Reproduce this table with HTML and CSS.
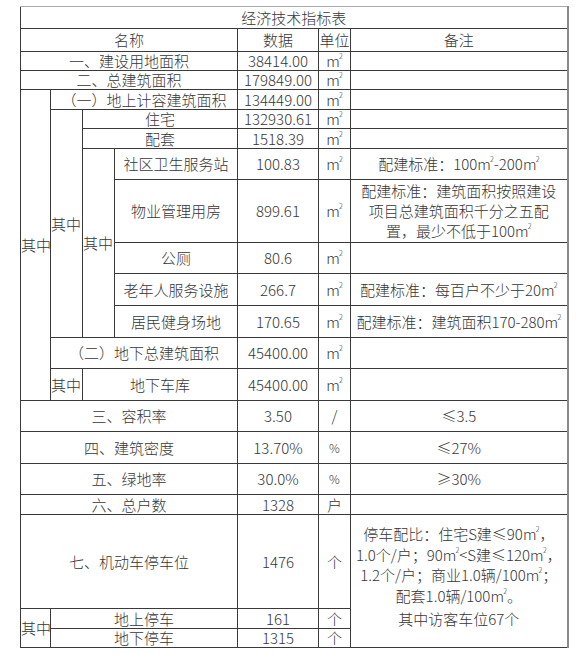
FILE: index.html
```html
<!DOCTYPE html>
<html lang="zh-CN">
<head>
<meta charset="utf-8">
<title>经济技术指标表</title>
<link rel="stylesheet" href="styles.css">
</head>
<body>
<div class="page">
<table class="sheet">
<colgroup>
<col class="c1"><col class="c2"><col class="c3"><col class="c4"><col class="c5"><col class="c6"><col class="c7">
</colgroup>
<tbody>
<tr class="h22"><td colspan="7" class="title">经济技术指标表</td></tr>
<tr class="h23"><td colspan="4" class="head">名称</td><td class="head">数据</td><td class="head">单位</td><td class="head">备注</td></tr>
<tr class="h19"><td colspan="4">一、建设用地面积</td><td>38414.00</td><td><span class="sq">m<sup>2</sup></span></td><td></td></tr>
<tr class="h19"><td colspan="4">二、总建筑面积</td><td>179849.00</td><td><span class="sq">m<sup>2</sup></span></td><td></td></tr>
<tr class="h20"><td rowspan="10" class="qz">其中</td><td colspan="3">（一）地上计容建筑面积</td><td>134449.00</td><td><span class="sq">m<sup>2</sup></span></td><td></td></tr>
<tr class="h19"><td rowspan="7" class="qz">其中</td><td colspan="2">住宅</td><td>132930.61</td><td><span class="sq">m<sup>2</sup></span></td><td></td></tr>
<tr class="h20"><td colspan="2">配套</td><td>1518.39</td><td><span class="sq">m<sup>2</sup></span></td><td></td></tr>
<tr class="h31"><td rowspan="5" class="qz">其中</td><td>社区卫生服务站</td><td>100.83</td><td><span class="sq">m<sup>2</sup></span></td><td>配建标准：100<span class="sq">m<sup>2</sup></span>-200<span class="sq">m<sup>2</sup></span></td></tr>
<tr class="h63"><td>物业管理用房</td><td>899.61</td><td><span class="sq">m<sup>2</sup></span></td><td class="multi">配建标准：建筑面积按照建设<br>项目总建筑面积千分之五配<br>置，最少不低于100<span class="sq">m<sup>2</sup></span></td></tr>
<tr class="h31"><td>公厕</td><td>80.6</td><td><span class="sq">m<sup>2</sup></span></td><td></td></tr>
<tr class="h32"><td>老年人服务设施</td><td>266.7</td><td><span class="sq">m<sup>2</sup></span></td><td>配建标准：每百户不少于20<span class="sq">m<sup>2</sup></span></td></tr>
<tr class="h32"><td>居民健身场地</td><td>170.65</td><td><span class="sq">m<sup>2</sup></span></td><td>配建标准：建筑面积170-280<span class="sq">m<sup>2</sup></span></td></tr>
<tr class="h31"><td colspan="3">（二）地下总建筑面积</td><td>45400.00</td><td><span class="sq">m<sup>2</sup></span></td><td></td></tr>
<tr class="h32"><td class="qz">其中</td><td colspan="2">地下车库</td><td>45400.00</td><td><span class="sq">m<sup>2</sup></span></td><td></td></tr>
<tr class="h31"><td colspan="4">三、容积率</td><td>3.50</td><td>/</td><td>≤3.5</td></tr>
<tr class="h32"><td colspan="4">四、建筑密度</td><td>13.70%</td><td class="pct">%</td><td>≤27%</td></tr>
<tr class="h31"><td colspan="4">五、绿地率</td><td>30.0%</td><td class="pct">%</td><td>≥30%</td></tr>
<tr class="h20"><td colspan="4">六、总户数</td><td>1328</td><td>户</td><td></td></tr>
<tr class="h94"><td colspan="4">七、机动车停车位</td><td>1476</td><td>个</td><td rowspan="3" class="park"><div class="park-ratio">停车配比：住宅S建≤90<span class="sq">m<sup>2</sup></span>，<br>1.0个/户；90<span class="sq">m<sup>2</sup></span>&lt;S建≤120<span class="sq">m<sup>2</sup></span>，<br>1.2个/户；商业1.0辆/100<span class="sq">m<sup>2</sup></span>；<br>配套1.0辆/100<span class="sq">m<sup>2</sup></span>。</div><div class="park-visit">其中访客车位67个</div></td></tr>
<tr class="h20"><td rowspan="2" class="qz">其中</td><td colspan="3">地上停车</td><td>161</td><td>个</td></tr>
<tr class="h19"><td colspan="3">地下停车</td><td>1315</td><td>个</td></tr>
</tbody>
</table>
</div>
</body>
</html>
```
FILE: styles.css
```css
html, body {
  margin: 0;
  padding: 0;
  background: #ffffff;
}
.page {
  padding: 6px 0 0 20px;
}
.sheet {
  border-collapse: collapse;
  table-layout: fixed;
  width: 548px;
  font-family: "Noto Sans CJK SC", "Noto Sans", sans-serif;
  font-weight: 300;
  font-size: 15px;
  color: #363636;
  border-top: 1px solid #aaaaaa;
  border-right: 2px solid #8a8a8a;
}
.c1 { width: 30px; }
.c2 { width: 32px; }
.c3 { width: 32px; }
.c4 { width: 123px; }
.c5 { width: 81px; }
.c6 { width: 32px; }
.c7 { width: 217px; }
.sheet td {
  border: 1px solid #3a3a3a;
  padding: 0;
  text-align: center;
  vertical-align: middle;
  line-height: 18px;
  white-space: nowrap;
}
.sheet .title { border-top: 1px solid #aaaaaa; }
.h19 { height: 19px; }
.h20 { height: 20px; }
.h22 { height: 22px; }
.h23 { height: 23px; }
.h31 { height: 31px; }
.h32 { height: 32px; }
.h63 { height: 63px; }
.h94 { height: 94px; }
.sheet td.qz {
  text-align: left;
}
.sq {
  display: inline-block;
  position: relative;
  padding-right: 3px;
  line-height: 15px;
}
.sq sup {
  position: absolute;
  right: 0;
  top: 0;
  font-size: 7px;
  line-height: 7px;
  vertical-align: baseline;
}
.pct {
  font-size: 12px;
}
.sheet td.multi {
  line-height: 20px;
}
.sheet td.park {
  vertical-align: top;
  padding: 0;
}
.park-ratio {
  line-height: 20.5px;
  padding-top: 9px;
  height: 94px;
  box-sizing: border-box;
}
.park-visit {
  line-height: 20px;
}
```
